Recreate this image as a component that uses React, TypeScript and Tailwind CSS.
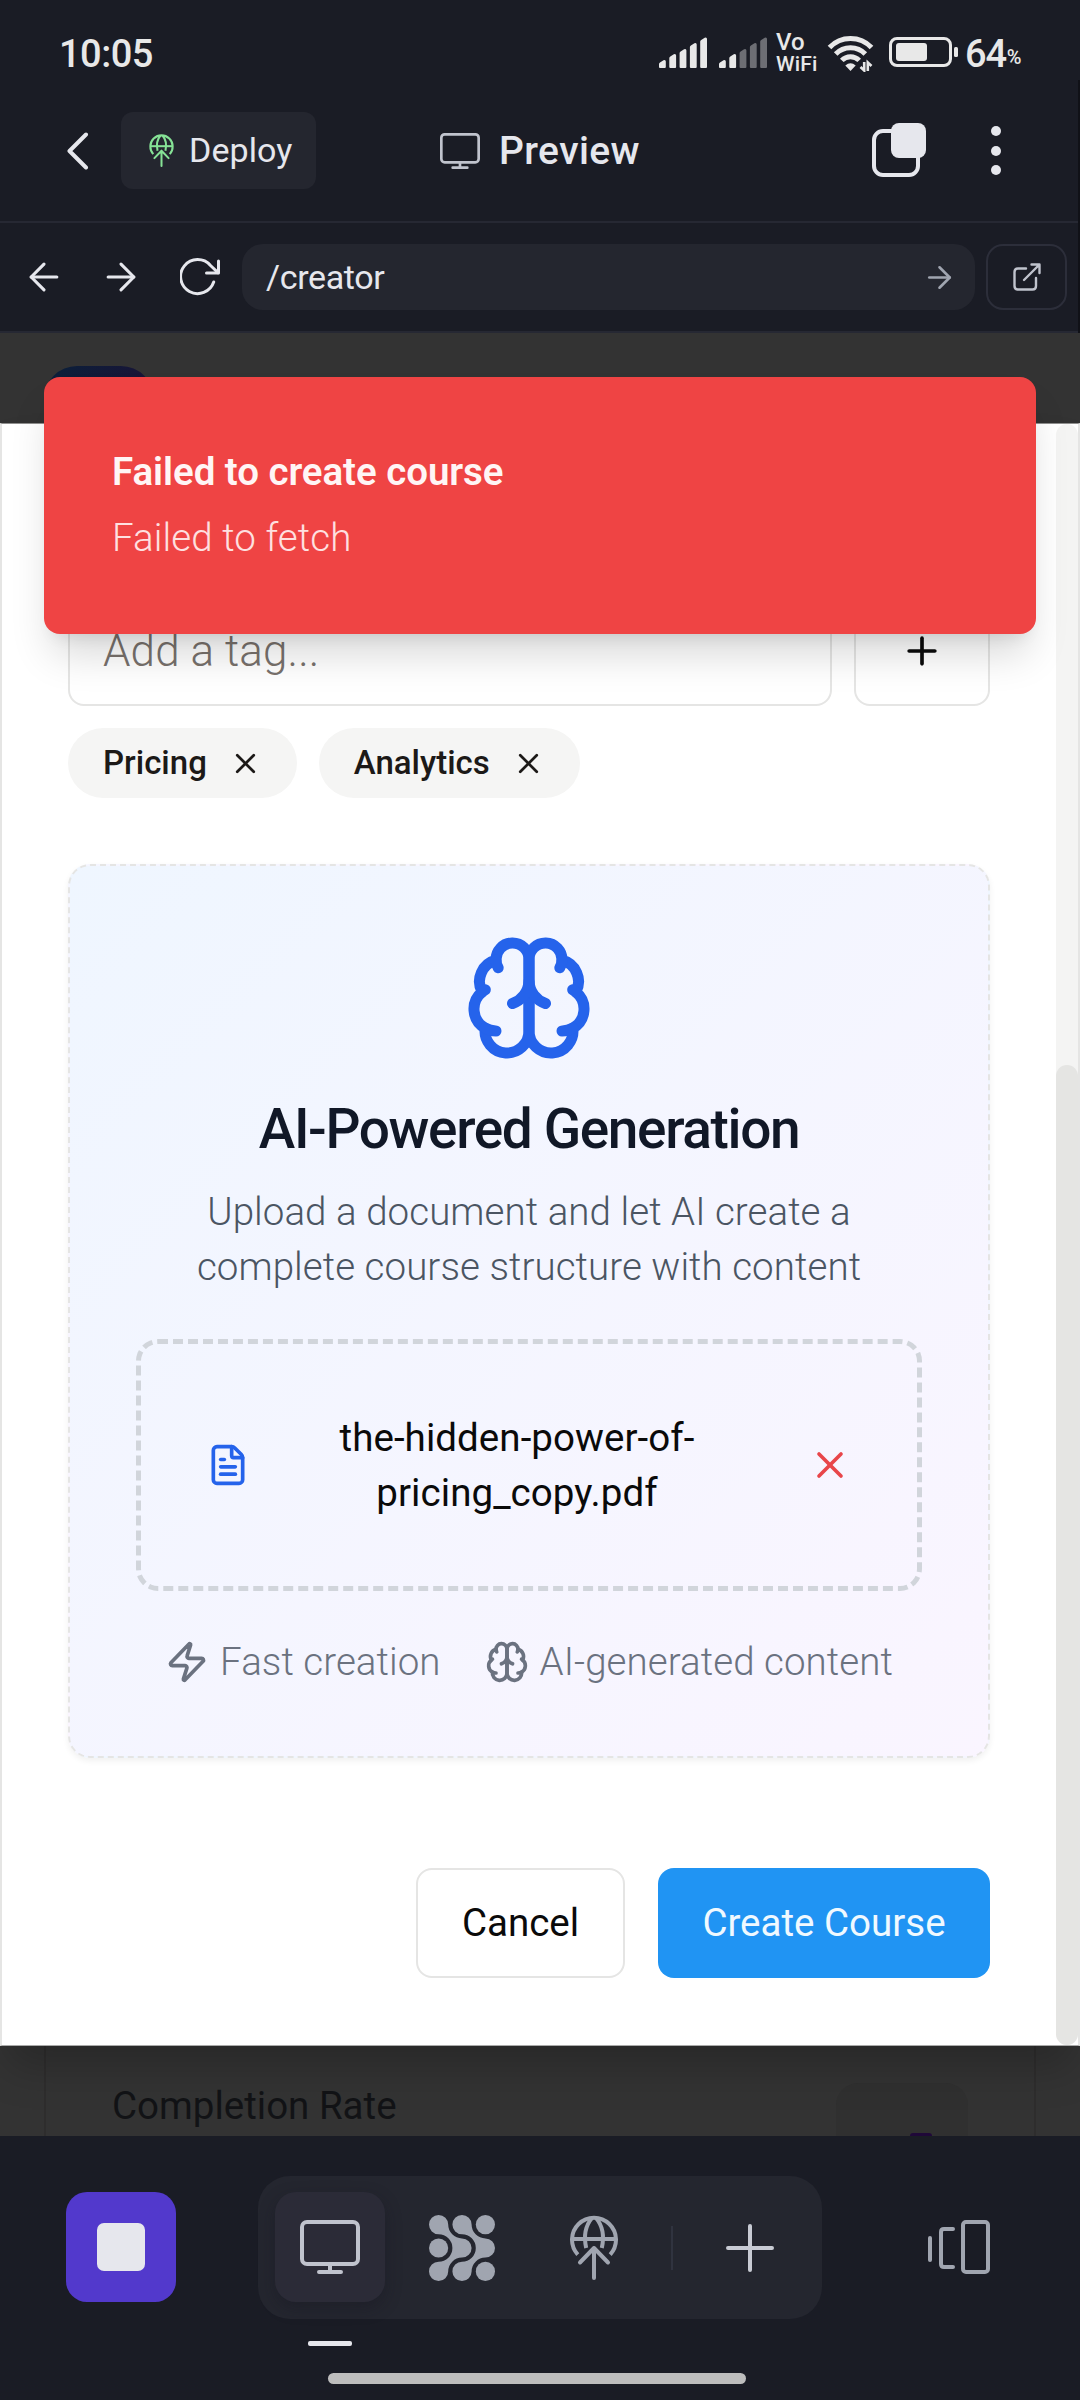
import React from "react";
import { X, Plus, Zap, FileText, ArrowLeft, ArrowRight } from "lucide-react";

function Brain({ size }: { size: number }) {
  return (
    <svg width={size} height={size} viewBox="0 0 24 24" fill="none" stroke="currentColor" strokeWidth="2" strokeLinecap="round" strokeLinejoin="round" className="shrink-0">
      <path d="M12 5a3 3 0 1 0-5.997.125 4 4 0 0 0-2.526 5.77 4 4 0 0 0 .556 6.588A4 4 0 1 0 12 18Z" />
      <path d="M12 5a3 3 0 1 1 5.997.125 4 4 0 0 1 2.526 5.77 4 4 0 0 1-.556 6.588A4 4 0 1 1 12 18Z" />
      <path d="M15 13a4.5 4.5 0 0 1-3-4 4.5 4.5 0 0 1-3 4" />
      <path d="M17.599 6.5a3 3 0 0 0 .399-1.375" />
      <path d="M6.003 5.125A3 3 0 0 0 6.401 6.5" />
      <path d="M3.477 10.896a4 4 0 0 1 .585-.396" />
      <path d="M19.938 10.5a4 4 0 0 1 .585.396" />
      <path d="M6 18a4 4 0 0 1-1.967-.516" />
      <path d="M19.967 17.484A4 4 0 0 1 18 18" />
    </svg>
  );
}

function GlobeUp({ width, height }: { width: number; height: number }) {
  return (
    <svg width={width} height={height} viewBox="0 0 48 65" fill="none" stroke="currentColor" strokeWidth="4" className="shrink-0">
      <path d="M7.8 39.6A22 22 0 1 1 40.2 39.6" />
      <path d="M2 24H46" />
      <path d="M22 3C16 10 13.5 21 16.2 33M26 3C32 10 34.5 21 31.8 33" />
      <path d="M24 33V63M10 47.5L24 33L38 47.5" strokeLinecap="round" strokeLinejoin="round" />
    </svg>
  );
}

function Monitor({ width, height, stroke }: { width: number; height: number; stroke: number }) {
  return (
    <svg width={width} height={height} viewBox="0 0 60 54" fill="none" stroke="currentColor" strokeWidth={stroke} strokeLinecap="round" className="shrink-0">
      <rect x="2" y="2" width="56" height="42" rx="5" />
      <path d="M30 44V51M19 52H41" />
    </svg>
  );
}

function Signal({ strong }: { strong: number }) {
  const tops = [23, 17, 12, 6, 0.5];
  return (
    <svg width="48" height="31" viewBox="0 0 48 31" className="shrink-0">
      {tops.map((t, i) => (
        <path
          key={t}
          d={`M${i * 10.3} 30V${t + 4}Q${i * 10.3} ${t + 3} ${i * 10.3 + 1} ${t + 2.4}L${i * 10.3 + 4.5} ${t + 0.2}Q${i * 10.3 + 6.8} ${t - 0.6} ${i * 10.3 + 6.8} ${t + 1.6}V30Q${i * 10.3 + 6.8} 31 ${i * 10.3 + 5.8} 31H${i * 10.3 + 1}Q${i * 10.3} 31 ${i * 10.3} 30Z`}
          fill={i < strong ? "#e8e8e8" : "#6d6e74"}
        />
      ))}
    </svg>
  );
}

function StatusBar() {
  return (
    <div className="flex h-[110px] items-start pl-[59px] text-[#e8e8e8]">
      <span className="mt-[31px] w-[600px] text-[38px] leading-[46px] font-medium tracking-[-0.5px]">10:05</span>
      <div className="mt-[37px]"><Signal strong={5} /></div>
      <div className="mt-[37px] ml-[12px]"><Signal strong={2} /></div>
      <div className="mt-[31px] ml-[9px] flex w-[42px] flex-col font-medium">
        <span className="text-[24px] leading-[22px]">Vo</span>
        <span className="text-[21px] leading-[22px] tracking-[0.2px]">WiFi</span>
      </div>
      <svg width="47" height="37" viewBox="0 0 47 37" fill="none" stroke="#e8e8e8" className="mt-[35px] ml-[9px] shrink-0">
        <path d="M2.5 12.5A29 29 0 0 1 44.5 12.5" strokeWidth="5" strokeLinecap="butt" />
        <path d="M8.7 19A20.5 20.5 0 0 1 38.3 19" strokeWidth="5" />
        <path d="M14.8 25.4A12 12 0 0 1 32.2 25.4" strokeWidth="5" />
        <path d="M23.5 36L18.3 30.5Q23.5 26 28.7 30.5Z" fill="#e8e8e8" stroke="none" />
        <path d="M37.2 27V35.500L33.500 32M40.8 36V27.500L44.500 31" strokeWidth="2.6" />
      </svg>
      <svg width="70" height="30" viewBox="0 0 70 30" className="mt-[37px] ml-[15px] shrink-0">
        <rect x="1.5" y="1.5" width="60" height="27" rx="6.5" fill="none" stroke="#e8e8e8" strokeWidth="3" />
        <rect x="7" y="6" width="31" height="18" rx="3" fill="#e8e8e8" />
        <rect x="65" y="10" width="4" height="10" rx="1.5" fill="#e8e8e8" />
      </svg>
      <span className="mt-[31px] ml-[6px] text-[38px] leading-[46px] font-medium tracking-[-1.2px]">64</span>
      <span className="mt-[45px] ml-[1px] text-[20px] leading-[24px] font-medium">%</span>
    </div>
  );
}

function AppHeader() {
  return (
    <div className="flex h-[113px] items-start border-b-2 border-[#262833] text-[#e6e7ed]">
      <svg width="22" height="38" viewBox="0 0 22 38" fill="none" stroke="currentColor" strokeWidth="4" strokeLinecap="round" strokeLinejoin="round" className="mt-[22px] ml-[67px]">
        <path d="M19 2.5L2.5 19L19 35.5" />
      </svg>
      <div className="mt-[2px] ml-[32px] flex h-[77px] w-[195px] items-center rounded-[12px] bg-[#24262f] pl-[28px]">
        <span className="text-[#86e296]"><GlobeUp width={25} height={33} /></span>
        <span className="ml-[15px] text-[34px] tracking-[0.1px]">Deploy</span>
      </div>
      <div className="mt-[2px] ml-[124px] flex h-[77px] w-[432px] items-center">
        <span className="text-[#c0c3cd]"><Monitor width={40} height={36} stroke={4} /></span>
        <span className="mt-[2px] ml-[19px] text-[39px] font-medium tracking-[0.4px]">Preview</span>
      </div>
      <svg width="54" height="54" viewBox="0 0 54 54" className="mt-[13px]">
        <rect x="2" y="8" width="44" height="44" rx="9" fill="none" stroke="#e6e7ed" strokeWidth="4" />
        <rect x="19" y="0" width="35" height="35" rx="8" fill="#e6e7ed" />
      </svg>
      <div className="mt-[16px] ml-[65px] flex flex-col gap-[9.5px]">
        <span className="size-[10px] rounded-full bg-[#e6e7ed]" />
        <span className="size-[10px] rounded-full bg-[#e6e7ed]" />
        <span className="size-[10px] rounded-full bg-[#e6e7ed]" />
      </div>
    </div>
  );
}

function UrlBar() {
  return (
    <div className="flex h-[110px] items-center border-b-2 border-[#262833] pl-[22px] text-[#e6e7ed]">
      <ArrowLeft size={44} strokeWidth={1.7} />
      <ArrowRight size={44} strokeWidth={1.7} className="ml-[33px]" />
      <svg width="40" height="38" viewBox="0 0 40 38" fill="none" stroke="currentColor" strokeWidth="3" strokeLinecap="round" strokeLinejoin="round" className="ml-[37px]">
        <path d="M33.7 24A17 17 0 1 1 30.5 7.5L38 14.6" />
        <path d="M38.5 3V15H26.5" />
      </svg>
      <div className="ml-[22px] flex h-[66px] w-[733px] items-center justify-between rounded-[21px] bg-[#24262f] pr-[18px] pl-[24px]">
        <span className="text-[34px] tracking-[-0.35px]">/creator</span>
        <ArrowRight size={35} strokeWidth={1.8} className="text-[#a0a5b0]" />
      </div>
      <div className="ml-[11px] flex h-[66px] w-[81px] items-center justify-center rounded-[17px] border-2 border-[#2c2e3a] text-[#c0c3cd]">
        <svg width="28" height="28" viewBox="0 0 28 28" fill="none" stroke="currentColor" strokeWidth="2.4" strokeLinecap="round" strokeLinejoin="round">
          <path d="M13 5.5H5Q1.5 5.5 1.5 9V23Q1.5 26.5 5 26.5H19.500Q23 26.500 23 23V15" />
          <path d="M11 17L26 2M18.500 1.500H26.500V10" />
        </svg>
      </div>
    </div>
  );
}

function Tag({ label }: { label: string }) {
  return (
    <span className="flex h-[70px] items-center rounded-full bg-[#f5f5f4] pr-[35px] pl-[35px] text-[33px] font-medium text-[#1c1917]">
      {label}
      <X size={33} strokeWidth={2} className="ml-[22px]" />
    </span>
  );
}

function CourseDialog() {
  return (
    <div className="absolute inset-x-0 top-[90px] flex h-[1623px] border-x-2 border-t border-b border-[#e5e5e4] border-t-[#8f8f8e] border-b-[#a9aaa9] bg-white shadow-[0_27px_41px_-8px_rgba(0,0,0,0.22)]">
      <div className="flex w-[1054px] flex-col justify-end px-[66px] pb-[67px]">
        <div className="flex gap-[22px]">
          <div className="flex h-[110px] w-[764px] items-center rounded-[16px] border-2 border-[#e5e5e4] px-[33px] text-[44px] font-light tracking-[0.1px] text-[#78716c]">Add a tag...</div>
          <div className="flex h-[110px] w-[136px] items-center justify-center rounded-[16px] border-2 border-[#e5e5e4] text-[#0a0a0a]">
            <Plus size={44} strokeWidth={2} />
          </div>
        </div>
        <div className="mt-[22px] flex gap-[22px]">
          <Tag label="Pricing" />
          <Tag label="Analytics" />
        </div>
        <div className="mt-[66px] flex flex-col items-center rounded-[22px] border-2 border-dashed border-[#e5e5e4] bg-linear-to-br from-[#eff6ff] to-[#faf5ff] px-[66px] pt-[66px] pb-[67px] shadow-[0_3px_6px_rgba(0,0,0,0.06)]">
          <span className="text-[#2563eb]"><Brain size={132} /></span>
          <h3 className="mt-[27px] text-[55px] leading-[77px] font-medium tracking-[-1.375px] whitespace-nowrap text-[#111827]">AI-Powered Generation</h3>
          <p className="mt-[16px] text-center text-[38.5px] leading-[55px] font-light tracking-[0.06px] whitespace-nowrap text-[#4b5563]">
            Upload a document and let AI create a<br />complete course structure with content
          </p>
          <div className="mt-[45px] flex h-[252px] w-full items-center rounded-[22px] border-5 border-dashed border-[#d1d5db] px-[65px]">
            <FileText size={44} strokeWidth={2} className="shrink-0 text-[#2563eb]" />
            <span className="mr-[24px] flex-1 text-center text-[38.5px] leading-[55px] tracking-[0.06px] text-[#0a0a0a]">the-hidden-power-of-pricing_copy.pdf</span>
            <X size={44} strokeWidth={2} className="shrink-0 text-[#e8464a]" />
          </div>
          <div className="mt-[43px] flex items-center gap-[44px] text-[38.5px] leading-[55px] font-light tracking-[0.06px] whitespace-nowrap text-[#6b7280]">
            <span className="flex items-center gap-[11px]"><Zap size={44} strokeWidth={2} />Fast creation</span>
            <span className="flex items-center gap-[11px]"><Brain size={44} />AI-generated content</span>
          </div>
        </div>
        <div className="mt-[110px] flex justify-end gap-[33px] text-[38.5px]">
          <div className="flex h-[110px] w-[209px] items-center justify-center rounded-[16px] border-2 border-[#e5e5e4] text-[#0a0a0a]">Cancel</div>
          <div className="flex h-[110px] w-[332px] items-center justify-center rounded-[16px] bg-[#2094f3] text-[#f0f9ff]">Create Course</div>
        </div>
      </div>
      <div className="flex w-[22px] flex-col justify-end rounded-full bg-[#f4f4f3]">
        <div className="h-[980px] rounded-full bg-[#e5e5e3]" />
      </div>
    </div>
  );
}

function PageContent() {
  return (
    <div className="relative h-[1803px] overflow-hidden bg-[#333333]">
      <div className="flex h-full flex-col justify-between px-[44px] pt-[33px]">
        <div className="size-[110px] rounded-[33px] bg-linear-to-br from-[#07203a] to-[#1f0533]" />
        <div className="flex h-[120px] items-start justify-between border-x-2 border-[#2e2d2d] pr-[66px] pl-[66px]">
          <span className="mt-[62px] text-[38.5px] leading-[55px] text-[#121316]">Completion Rate</span>
          <div className="mt-[67px] flex h-[53px] w-[132px] items-end justify-center rounded-t-[22px] bg-[#303030] pl-[38px]">
            <div className="h-[3px] w-[22px] rounded-t-[3px] bg-[#1f0838]" />
          </div>
        </div>
      </div>
      <CourseDialog />
      <div className="absolute top-[44px] left-[44px] flex h-[257px] w-[992px] flex-col gap-[11px] rounded-[16px] bg-[#ef4444] pt-[67px] pl-[68px] text-[38.5px] leading-[55px] shadow-[0_27px_41px_-8px_rgba(0,0,0,0.16),0_11px_17px_-11px_rgba(0,0,0,0.12)]">
        <span className="font-semibold tracking-[-0.06px] text-[#fff5f5]">Failed to create course</span>
        <span className="font-light tracking-[0.08px] text-[#fee0e0]">Failed to fetch</span>
      </div>
    </div>
  );
}

function BottomNav() {
  return (
    <div className="flex h-[264px] flex-col">
      <div className="flex pt-[40px] pl-[66px]">
        <div className="mt-[16px] flex size-[110px] items-center justify-center rounded-[21px] bg-[#5239cc]">
          <div className="size-[48px] rounded-[7px] bg-[#e6e7ed]" />
        </div>
        <div className="ml-[82px] flex h-[143px] w-[564px] items-center rounded-[32px] bg-[#24262f] pl-[17px] text-[#a0a5b0]">
          <div className="-mt-[1px] flex size-[110px] items-center justify-center rounded-[21px] bg-[#2b2b37] text-[#c0c3cd] shadow-[0_6px_16px_rgba(20,20,32,0.35)]">
            <Monitor width={60} height={54} stroke={4} />
          </div>
          <svg width="66" height="66" viewBox="0 0 66 66" fill="currentColor" className="ml-[44px]">
            <path d="M9.6 19.2A13.8 13.8 0 0 1 9.6 46.8A9.6 9.6 0 1 0 19.2 56.400A13.8 13.8 0 0 1 33 42.600A9.6 9.6 0 0 0 33 23.400A13.8 13.8 0 0 1 19.2 9.6A9.6 9.6 0 1 0 9.6 19.2Z" />
            <path d="M33 19.2A13.8 13.8 0 0 1 33 46.800A9.6 9.6 0 1 0 42.600 56.400A13.8 13.8 0 0 1 56.400 42.600A9.6 9.6 0 0 0 56.400 23.400A13.8 13.8 0 0 1 42.600 9.6A9.6 9.6 0 1 0 33 19.2Z" />
            <circle cx="56.400" cy="9.6" r="9.600" />
            <circle cx="9.6" cy="33" r="9.600" />
            <circle cx="56.400" cy="56.400" r="9.600" />
          </svg>
          <span className="ml-[75px]"><GlobeUp width={48} height={65} /></span>
          <div className="ml-[53px] h-[44px] w-[2px] bg-[#30333f]" />
          <svg width="48" height="48" viewBox="0 0 48 48" stroke="#c8cbd4" strokeWidth="4" strokeLinecap="round" className="ml-[53px]">
            <path d="M24 2V46M2 24H46" />
          </svg>
        </div>
        <svg width="62" height="54" viewBox="0 0 62 54" fill="none" stroke="#a0a5b0" strokeWidth="4" strokeLinecap="round" className="mt-[44px] ml-[106px]">
          <path d="M2 18V40" />
          <path d="M25 9H16Q13 9 13 12V44Q13 47 16 47H25" />
          <rect x="35" y="2" width="25" height="50" rx="3" />
        </svg>
      </div>
      <div className="mt-[22px] ml-[308px] h-[5px] w-[44px] rounded-[2px] bg-[#e6e7ed]" />
      <div className="mt-[27px] ml-[328px] h-[11px] w-[418px] rounded-full bg-[#bdbdbd]" />
    </div>
  );
}

export default function App() {
  return (
    <div className="relative flex h-[2400px] w-[1080px] flex-col overflow-hidden bg-[#1a1c25] font-['Roboto',sans-serif]">
      <StatusBar />
      <AppHeader />
      <UrlBar />
      <div className="absolute top-[80px] right-0 h-[253px] w-[2px] bg-[#101117]" />
      <PageContent />
      <BottomNav />
    </div>
  );
}
